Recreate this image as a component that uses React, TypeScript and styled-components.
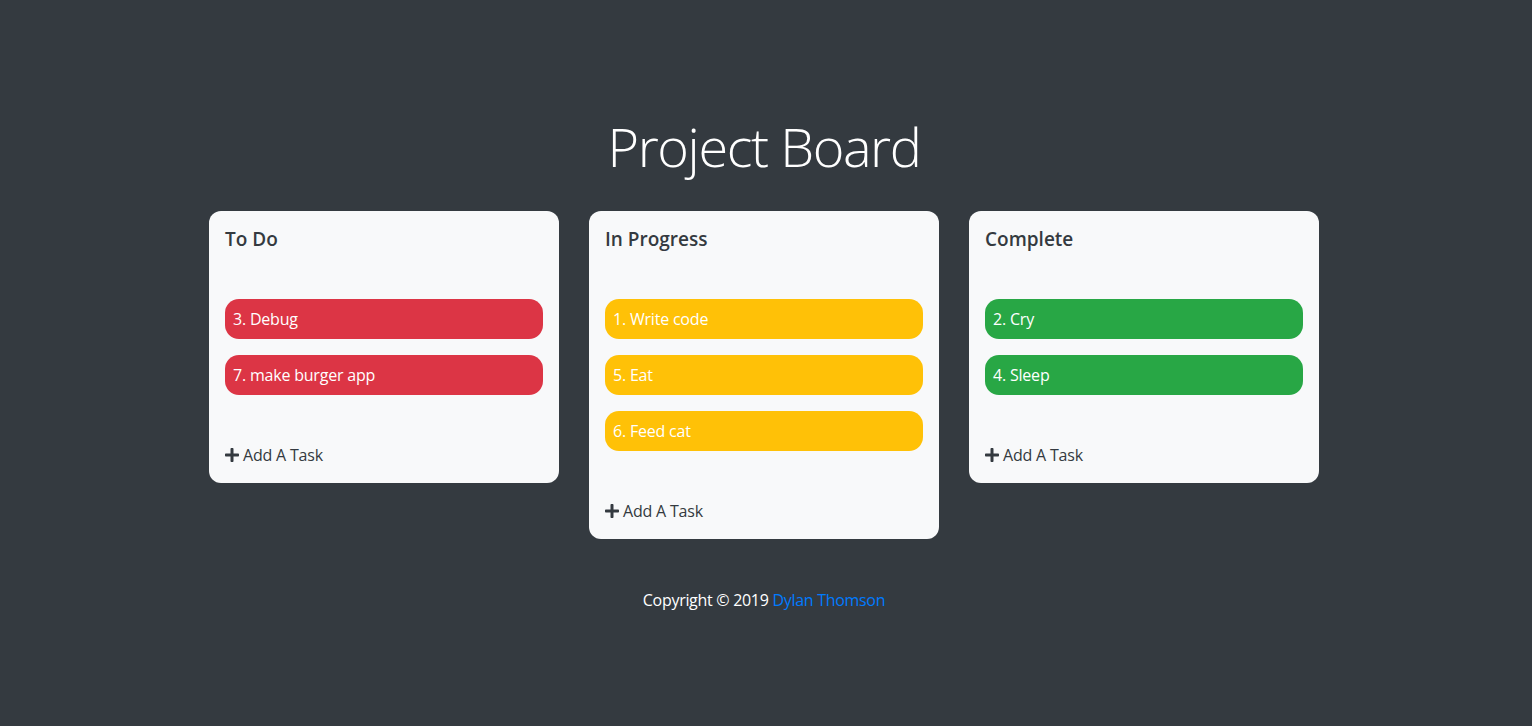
import React from "react";
import styled, { createGlobalStyle } from "styled-components";

const GlobalStyle = createGlobalStyle`
  html, body {
    margin: 0;
    padding: 0;
    background: #343a40;
    font-family: "Segoe UI", "Open Sans", "Noto Sans", Arial, sans-serif;
    color: #212529;
  }
  * { box-sizing: border-box; }
`;

const Page = styled.div`
  min-height: 726px;
  display: flex;
  flex-direction: column;
  align-items: center;
  padding-top: 114px;
  padding-right: 4px;
`;

const Title = styled.h1`
  margin: 0 0 33px;
  font-size: 54px;
  font-weight: 300;
  line-height: 64px;
  letter-spacing: -1.4px;
  color: #ffffff;
`;

const Board = styled.div`
  display: flex;
  align-items: flex-start;
  gap: 30px;
`;

const Column = styled.section`
  width: 350px;
  background: #f8f9fa;
  border-radius: 12px;
  padding: 16px;
  display: flex;
  flex-direction: column;
`;

const ColumnTitle = styled.h5`
  margin: 0 0 48px;
  font-size: 19px;
  font-weight: 600;
  line-height: 24px;
  color: #343a40;
`;

const TaskList = styled.div`
  display: flex;
  flex-direction: column;
  gap: 16px;
  margin-bottom: 48px;
`;

const Task = styled.div<{ $color: string }>`
  height: 40px;
  border-radius: 14px;
  background: ${(p) => p.$color};
  color: #ffffff;
  font-size: 16px;
  line-height: 40px;
  padding: 0 8px;
  letter-spacing: -0.2px;
`;

const AddButton = styled.div`
  display: flex;
  align-items: center;
  gap: 4px;
  font-size: 16px;
  line-height: 24px;
  color: #343a40;
  letter-spacing: -0.2px;
`;

const PlusIcon = styled.svg`
  width: 14px;
  height: 16px;
  fill: #343a40;
`;

const Footer = styled.footer`
  margin-top: 49px;
  font-size: 16px;
  line-height: 24px;
  letter-spacing: -0.3px;
  color: #ffffff;
`;

const Link = styled.a`
  color: #007bff;
  text-decoration: none;
`;

const columns = [
  { title: "To Do", color: "#dc3545", tasks: ["3. Debug", "7. make burger app"] },
  { title: "In Progress", color: "#ffc107", tasks: ["1. Write code", "5. Eat", "6. Feed cat"] },
  { title: "Complete", color: "#28a745", tasks: ["2. Cry", "4. Sleep"] },
];

export default function App() {
  return (
    <>
      <GlobalStyle />
      <Page>
        <Title>Project Board</Title>
        <Board>
          {columns.map((c) => (
            <Column key={c.title}>
              <ColumnTitle>{c.title}</ColumnTitle>
              <TaskList>
                {c.tasks.map((t) => (
                  <Task key={t} $color={c.color}>{t}</Task>
                ))}
              </TaskList>
              <AddButton>
                <PlusIcon viewBox="0 0 448 512">
                  <path d="M416 208H272V64c0-17.67-14.33-32-32-32h-32c-17.67 0-32 14.33-32 32v144H32c-17.67 0-32 14.33-32 32v32c0 17.670 14.33 32 32 32h144v144c0 17.67 14.33 32 32 32h32c17.67 0 32-14.33 32-32V304h144c17.67 0 32-14.33 32-32v-32c0-17.67-14.33-32-32-32z" />
                </PlusIcon>
                Add A Task
              </AddButton>
            </Column>
          ))}
        </Board>
        <Footer>
          Copyright © 2019 <Link href="#">Dylan Thomson</Link>
        </Footer>
      </Page>
    </>
  );
}
